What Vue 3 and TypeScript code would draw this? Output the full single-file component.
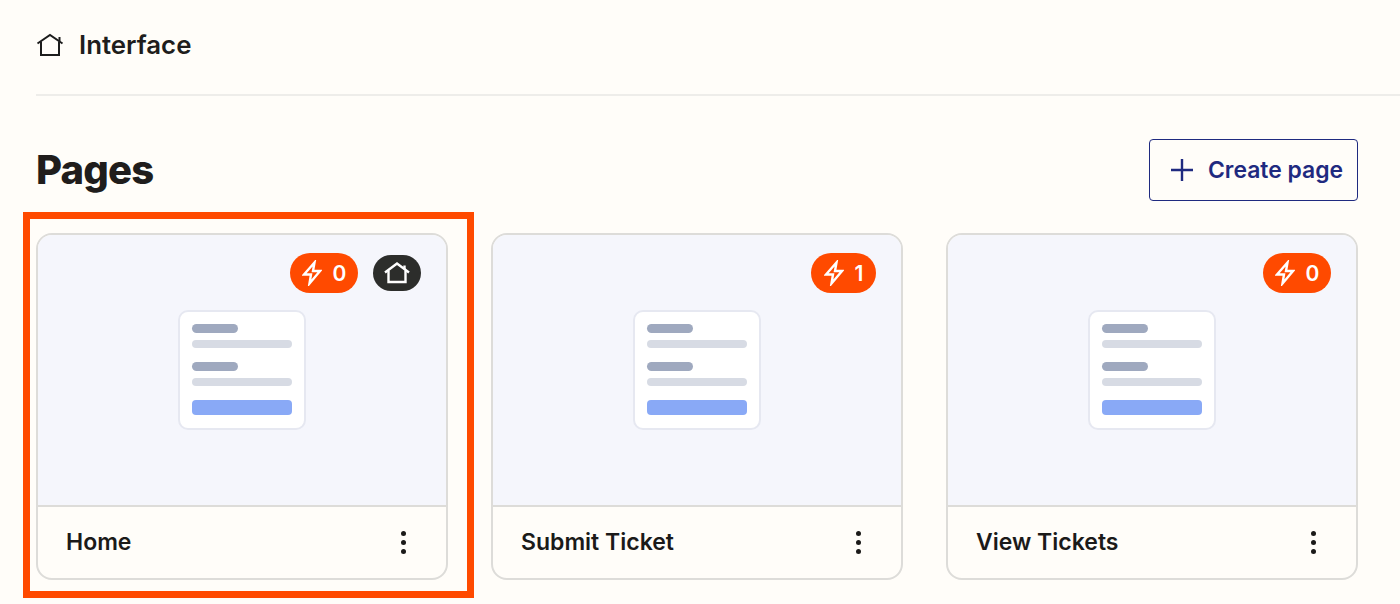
<script setup lang="ts">
interface PageCard { name: string; count: number; home: boolean }
const cards: PageCard[] = [
  { name: 'Home', count: 0, home: true },
  { name: 'Submit Ticket', count: 1, home: false },
  { name: 'View Tickets', count: 0, home: false },
]
</script>

<template>
  <div class="page">
    <header class="top">
      <svg class="top-icon" width="28" height="26" viewBox="0 0 28 26" fill="none" stroke="#1c1c1c" stroke-width="2">
        <path d="M1.500 11.500 14 3l12.500 8.500" />
        <path d="M5 9.500V23h18V9.500" />
        <path d="M23.500 5v4" />
      </svg>
      <span class="top-title">Interface</span>
    </header>
    <div class="title-row">
      <h1>Pages</h1>
      <button class="create" type="button">
        <svg width="22" height="22" viewBox="0 0 22 22" stroke="#1f2a80" stroke-width="2.4" fill="none">
          <path d="M11 0v22M0 11h22" />
        </svg>
        <span>Create page</span>
      </button>
    </div>
    <div class="grid">
      <article v-for="(card, i) in cards" :key="card.name" class="card">
        <div v-if="i === 0" class="highlight"></div>
        <div class="preview">
          <div class="badges">
            <span class="zap" :class="{ one: card.count === 1 }">
              <svg width="20" height="26" viewBox="0 0 20 26" fill="none" stroke="#fff" stroke-width="2.400" stroke-linejoin="miter">
                <path d="M12.500 2.500 2 14.500H9L7.500 23.500 18 11H11z" />
              </svg>
              <b>{{ card.count }}</b>
            </span>
            <span v-if="card.home" class="home-badge">
              <svg width="28" height="24" viewBox="0 0 28 24" fill="none" stroke="#fff" stroke-width="2.400">
                <path d="M2 11.500 14 2.500l12 9" />
                <path d="M5.500 9.500V21h17V9.500" />
                <path d="M21.500 4.500v3.500" />
              </svg>
            </span>
          </div>
          <div class="mini">
            <i class="dark"></i>
            <i class="light"></i>
            <i class="dark second"></i>
            <i class="light"></i>
            <i class="cta"></i>
          </div>
        </div>
        <footer class="foot">
          <span class="name">{{ card.name }}</span>
          <span class="dots"><i></i><i></i><i></i></span>
        </footer>
      </article>
    </div>
  </div>
</template>

<style>
html, body { margin: 0; background: #fffdf9; }
</style>

<style scoped>
.page {
  width: 1400px;
  height: 604px;
  box-sizing: border-box;
  padding: 0 42px 0 36px;
  background: #fffdf9;
  font-family: Inter, "Liberation Sans", sans-serif;
  color: #201d1c;
  overflow: hidden;
}
.top {
  height: 96px;
  box-sizing: border-box;
  border-bottom: 2px solid #eeedea;
  margin-right: -42px;
  display: flex;
  align-items: center;
  gap: 15px;
  padding-bottom: 5px;
}
.top-icon { flex: none; }
.top-title { font-size: 25.800px; font-weight: 600; }
.title-row {
  height: 105px;
  padding-top: 43px;
  box-sizing: border-box;
  display: flex;
  justify-content: space-between;
  align-items: flex-start;
}
h1 {
  margin: 9px 0 0;
  font-size: 40px;
  line-height: 44px;
  font-weight: 800;
  letter-spacing: -0.800px;
}
.create {
  width: 209px;
  height: 62px;
  box-sizing: border-box;
  border: 1px solid #1f2a80;
  border-radius: 4px;
  background: transparent;
  display: flex;
  align-items: center;
  gap: 15px;
  padding: 0 0 0 21px;
  font: 600 22.900px Inter, "Liberation Sans", sans-serif;
  color: #1f2a80;
}
.create svg { flex: none; }
.grid {
  display: grid;
  grid-template-columns: repeat(3, 412px);
  column-gap: 43px;
  margin-top: 32px;
}
.card {
  position: relative;
  height: 347px;
  box-sizing: border-box;
  border: 2px solid #dddcd9;
  border-radius: 16px;
  display: flex;
  flex-direction: column;
}
.highlight {
  position: absolute;
  left: -15px;
  top: -23px;
  width: 451px;
  height: 386px;
  box-sizing: border-box;
  border: 7px solid #ff4a00;
  pointer-events: none;
}
.preview {
  height: 272px;
  box-sizing: border-box;
  background: #f5f6fc;
  border-bottom: 2px solid #dddcd9;
  border-radius: 14px 14px 0 0;
  display: flex;
  flex-direction: column;
  align-items: center;
  padding-top: 18px;
}
.badges {
  align-self: flex-end;
  height: 40px;
  display: flex;
  align-items: center;
  gap: 15px;
  padding-right: 25px;
}
.zap {
  height: 40px;
  width: 68px;
  border-radius: 20px;
  background: #ff4a00;
  color: #fff;
  display: flex;
  align-items: center;
  justify-content: center;
  gap: 11px;
  box-sizing: border-box;
}
.zap.one { width: 65px; }
.zap b { font-size: 21px; font-weight: 600; }
.home-badge {
  width: 48px;
  height: 36px;
  border-radius: 18px;
  background: #2c2d2b;
  display: flex;
  align-items: center;
  justify-content: center;
}
.mini {
  margin-top: 17px;
  width: 128px;
  height: 120px;
  box-sizing: border-box;
  background: #fff;
  border: 2px solid #e6e8f1;
  border-radius: 10px;
  padding: 12px 12px 0;
  display: flex;
  flex-direction: column;
  align-items: flex-start;
}
.mini i { display: block; border-radius: 5px; }
.dark { width: 46px; height: 9px; background: #9fa9bf; }
.light { width: 100px; height: 8px; background: #d7dbe4; margin-top: 7px; }
.dark.second { margin-top: 14px; }
.mini .cta { width: 100px; height: 15px; background: #89a9f6; margin-top: 14px; border-radius: 4px; }
.foot {
  flex: 1;
  display: flex;
  align-items: center;
  justify-content: space-between;
  padding: 0 40px 0 28px;
}
.name { font-size: 23px; font-weight: 600; color: #1b1a19; margin-top: -2px; }
.dots { display: flex; flex-direction: column; gap: 4px; }
.dots i { width: 5px; height: 5px; border-radius: 50%; background: #1b1a19; display: block; }
</style>
